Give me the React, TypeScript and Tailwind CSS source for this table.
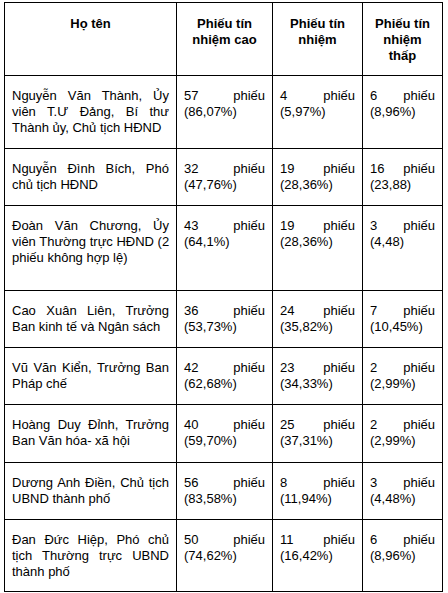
import React from "react";

const rows: [string | string[], string, string, string][] = [
  ["Nguyễn Văn Thành, Ủy viên T.Ư Đảng, Bí thư Thành ủy, Chủ tịch HĐND", "57 phiếu (86,07%)", "4 phiếu (5,97%)", "6 phiếu (8,96%)"],
  ["Nguyễn Đình Bích, Phó chủ tịch HĐND", "32 phiếu (47,76%)", "19 phiếu (28,36%)", "16 phiếu (23,88)"],
  [["Đoàn Văn Chương, Ủy", "viên Thường trực HĐND (2", "phiếu không hợp lệ)"], "43 phiếu (64,1%)", "19 phiếu (28,36%)", "3 phiếu (4,48)"],
  ["Cao Xuân Liên, Trưởng Ban kinh tế và Ngân sách", "36 phiếu (53,73%)", "24 phiếu (35,82%)", "7 phiếu (10,45%)"],
  ["Vũ Văn Kiển, Trưởng Ban Pháp chế", "42 phiếu (62,68%)", "23 phiếu (34,33%)", "2 phiếu (2,99%)"],
  ["Hoàng Duy Đỉnh, Trưởng Ban Văn hóa- xã hội", "40 phiếu (59,70%)", "25 phiếu (37,31%)", "2 phiếu (2,99%)"],
  ["Dương Anh Điền, Chủ tịch UBND thành phố", "56 phiếu (83,58%)", "8 phiếu (11,94%)", "3 phiếu (4,48%)"],
  ["Đan Đức Hiệp, Phó chủ tịch Thường trực UBND thành phố", "50 phiếu (74,62%)", "11 phiếu (16,42%)", "6 phiếu (8,96%)"],
];

const headers = ["Họ tên", "Phiếu tín nhiệm cao", "Phiếu tín nhiệm", "Phiếu tín nhiệm thấp"];

export default function App() {
  return (
    <div
      className="min-h-[593px] w-[448px] bg-white pt-[2px] pl-[4px] text-black"
      style={{ fontFamily: '"Liberation Sans", Arial, sans-serif' }}
    >
      <div className="grid w-max grid-cols-[172px_96px_90px_80px] grid-rows-[73px_73px_57px_85px_57px_57px_58px_57px_72px] border-l border-t border-black text-[13px] leading-[16px]">
        {headers.map((h) => (
          <div
            key={h}
            className="border-b border-r border-black px-[7px] pt-[13px] text-center font-bold"
          >
            {h}
          </div>
        ))}
        {rows.map((r, i) =>
          r.map((c, j) => (
            <div
              key={`${i}-${j}`}
              className="border-b border-r border-black px-[7px] pt-[12px] text-justify"
            >
              {Array.isArray(c)
                ? c.map((line, k) => (
                    <div
                      key={k}
                      className={
                        k < c.length - 1
                          ? "whitespace-nowrap text-justify [text-align-last:justify]"
                          : "whitespace-nowrap text-left"
                      }
                    >
                      {line}
                    </div>
                  ))
                : c}
            </div>
          ))
        )}
      </div>
    </div>
  );
}
